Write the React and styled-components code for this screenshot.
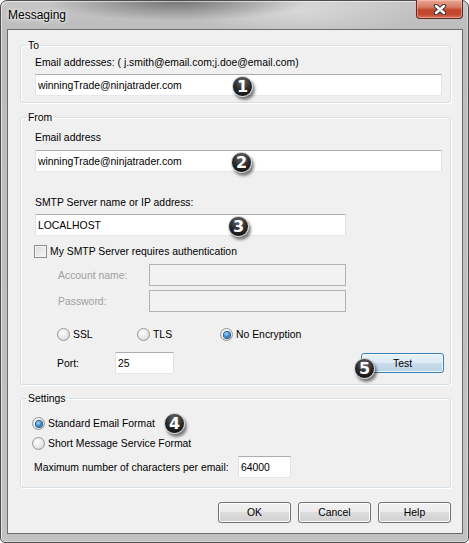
import React from 'react';
import styled, { createGlobalStyle, css } from 'styled-components';

const GlobalStyle = createGlobalStyle`
  html, body {
    margin: 0;
    padding: 0;
    background: #ffffff;
  }
  body {
    font-family: "Liberation Sans", Arial, sans-serif;
    font-size: 10.4px;
    color: #000000;
  }
  * {
    box-sizing: border-box;
  }
`;

const Window = styled.div`
  width: 469px;
  height: 543px;
  display: flex;
  flex-direction: column;
  padding: 0 5px 8px 6px;
  border: 1px solid #4e4e4e;
  border-radius: 7px 7px 5px 5px;
  background:
    radial-gradient(ellipse 130px 20px at 175px 0px, rgba(60, 60, 60, 0.6), rgba(60, 60, 60, 0) 100%),
    radial-gradient(ellipse 110px 30px at 300px 10px, rgba(255, 255, 255, 0.35), rgba(255, 255, 255, 0) 100%),
    linear-gradient(to bottom, #c6c6c6 0px, #bcbcbc 30px, #c2c2c2 100%);
  box-shadow: inset 1px 1px 0 rgba(255, 255, 255, 0.55), inset -1px -1px 0 rgba(255, 255, 255, 0.35);
`;

const TitleBar = styled.div`
  height: 28px;
  display: flex;
  justify-content: space-between;
  align-items: flex-start;
`;

const Title = styled.span`
  margin: 7px 0 0 1px;
  font-size: 12px;
  line-height: 15px;
  color: #000000;
  text-shadow: 0 0 6px rgba(255, 255, 255, 0.95), 0 0 3px rgba(255, 255, 255, 0.9);
`;

const CloseButton = styled.div`
  width: 47px;
  height: 19px;
  margin: -1px 0 0 0;
  display: flex;
  align-items: center;
  justify-content: center;
  border: 1px solid #5b2a22;
  border-top: none;
  border-radius: 0 0 4px 4px;
  background: linear-gradient(to bottom, #e7a793 0%, #d77a63 40%, #c1462c 55%, #c2482e 80%, #d8765b 100%);
  box-shadow: inset 0 0 0 1px rgba(255, 210, 200, 0.45);
`;

const Client = styled.div`
  flex: 1;
  display: flex;
  flex-direction: column;
  padding: 9px 11px 0 12px;
  border: 1px solid #6b6b6b;
  background: #f0f0f0;
`;

const Group = styled.fieldset`
  margin: ${p => p.$top || 0}px 0 0 0;
  padding: 0;
  min-width: 0;
  border: 1px solid #d5dfe5;
  border-radius: 3px;
  box-shadow: inset 1px 1px 0 #ffffff, 1px 1px 0 #ffffff;
`;

const Legend = styled.legend`
  margin-left: 5px;
  padding: 0 2px;
  line-height: 13px;
  color: #000000;
`;

const GroupBody = styled.div`
  display: flex;
  flex-direction: column;
  padding: ${p => p.$pad};
`;

const Label = styled.div`
  line-height: 13px;
  margin-top: ${p => p.$top || 0}px;
  margin-left: ${p => p.$left || 0}px;
  color: ${p => (p.$disabled ? '#a0a0a0' : '#000000')};
`;

const Field = styled.div`
  position: relative;
  width: ${p => (p.$width ? `${p.$width}px` : 'auto')};
  margin-top: ${p => p.$top || 0}px;
`;

const TextBox = styled.input`
  display: block;
  width: ${p => (p.$width ? `${p.$width}px` : '100%')};
  height: 22px;
  margin: 0;
  padding: 0 2px;
  font: inherit;
  color: #000000;
  outline: none;
  border: 1px solid #e2e3ea;
  border-top-color: #abadb3;
  border-bottom-color: #e3e9ef;
  background: #ffffff;

  ${p =>
    p.$disabled &&
    css`
      border: 1px solid #aeb2b5;
      background: #f2f2f2;
    `}
`;

const Row = styled.div`
  display: flex;
  align-items: center;
  margin-top: ${p => p.$top || 0}px;
  margin-left: ${p => p.$left || 0}px;
  position: relative;
`;

const RowLabel = styled.span`
  width: ${p => p.$width}px;
  flex: none;
  line-height: 13px;
  color: ${p => (p.$disabled ? '#a0a0a0' : '#000000')};
`;

const CheckBox = styled.span`
  width: 13px;
  height: 13px;
  flex: none;
  border: 1px solid #8e8f8f;
  background: linear-gradient(135deg, #dcdcdc 0%, #f6f6f6 100%);
  box-shadow: inset 0 0 0 1px #f4f4f4;
  margin-right: 3px;
`;

const RadioItem = styled.span`
  display: flex;
  align-items: center;
  width: ${p => (p.$width ? `${p.$width}px` : 'auto')};
  line-height: 13px;
`;

const RadioDot = styled.span`
  width: 13px;
  height: 13px;
  flex: none;
  margin-right: 3px;
  border-radius: 50%;
  border: 1px solid #979797;
  background: radial-gradient(circle at 40% 35%, #ffffff 0%, #ececec 45%, #cfcfcf 100%);
  display: flex;
  align-items: center;
  justify-content: center;

  &::after {
    content: '';
    width: 6px;
    height: 6px;
    border-radius: 50%;
    display: ${p => (p.$checked ? 'block' : 'none')};
    background: radial-gradient(circle at 40% 35%, #aee0ff 0%, #3d8fd3 45%, #0d4e8c 100%);
    box-shadow: 0 0 0 1px #2a5f8f;
  }
`;

const Button = styled.div`
  width: ${p => p.$width}px;
  height: ${p => p.$height || 21}px;
  display: flex;
  align-items: center;
  justify-content: center;
  border: 1px solid ${p => (p.$default ? '#3c7fb1' : '#707070')};
  border-radius: 3px;
  background: ${p =>
    p.$default
      ? 'linear-gradient(to bottom, #e9f3fb 0%, #dbeaf6 50%, #c8dceb 50%, #bcd3e4 100%)'
      : 'linear-gradient(to bottom, #f2f2f2 0%, #ebebeb 50%, #dddddd 50%, #cfcfcf 100%)'};
  box-shadow: inset 0 0 0 1px ${p => (p.$default ? '#f0f8fd' : '#fcfcfc')};
  line-height: 13px;
  position: relative;
`;

const Badge = styled.span`
  position: absolute;
  left: ${p => p.$x}px;
  top: ${p => p.$y}px;
  width: 21px;
  height: 21px;
  border-radius: 50%;
  border: 1px solid #c9c9c9;
  background: radial-gradient(circle at 50% 25%, #6a6a6a 0%, #2b2b2b 50%, #080808 100%);
  box-shadow: 2px 3px 3px rgba(0, 0, 0, 0.5);
  color: #ffffff;
  font: bold 16px/19px "DejaVu Sans", sans-serif;
  text-align: center;
  z-index: 2;
`;

const ButtonBar = styled.div`
  display: flex;
  justify-content: flex-end;
  gap: 7px;
  margin-top: 14px;
`;

const CloseGlyph = () => (
  <svg width="14" height="11" viewBox="0 0 14 11">
    <path d="M3 2 L11 9 M11 2 L3 9" stroke="#3a3a3a" strokeWidth="4.4" strokeLinecap="round" fill="none" />
    <path d="M3 2 L11 9 M11 2 L3 9" stroke="#ffffff" strokeWidth="2.4" strokeLinecap="round" fill="none" />
  </svg>
);

const App = () => (
  <>
    <GlobalStyle />
    <Window>
      <TitleBar>
        <Title>Messaging</Title>
        <CloseButton>
          <CloseGlyph />
        </CloseButton>
      </TitleBar>
      <Client>
        <Group>
          <Legend>To</Legend>
          <GroupBody $pad="4px 8px 6px 14px">
            <Label>Email addresses: ( j.smith@email.com;j.doe@email.com)</Label>
            <Field $top={5}>
              <TextBox readOnly value="winningTrade@ninjatrader.com" />
              <Badge $x={197} $y={2}>1</Badge>
            </Field>
          </GroupBody>
        </Group>

        <Group $top={8}>
          <Legend>From</Legend>
          <GroupBody $pad="7px 8px 10px 14px">
            <Label>Email address</Label>
            <Field $top={6}>
              <TextBox readOnly value="winningTrade@ninjatrader.com" />
              <Badge $x={196} $y={2}>2</Badge>
            </Field>
            <Label $top={24}>SMTP Server name or IP address:</Label>
            <Field $top={5} $width={311}>
              <TextBox readOnly value="LOCALHOST" />
              <Badge $x={193} $y={2}>3</Badge>
            </Field>
            <Row $top={9} $left={-1}>
              <CheckBox />
              <span>My SMTP Server requires authentication</span>
            </Row>
            <Row $top={6} $left={23}>
              <RowLabel $width={91} $disabled>Account name:</RowLabel>
              <TextBox readOnly $disabled $width={197} value="" />
            </Row>
            <Row $top={4} $left={23}>
              <RowLabel $width={91} $disabled>Password:</RowLabel>
              <TextBox readOnly $disabled $width={197} value="" />
            </Row>
            <Row $top={16} $left={22}>
              <RadioItem $width={80}>
                <RadioDot />
                SSL
              </RadioItem>
              <RadioItem $width={83}>
                <RadioDot />
                TLS
              </RadioItem>
              <RadioItem>
                <RadioDot $checked />
                No Encryption
              </RadioItem>
            </Row>
            <Row $top={11} $left={22}>
              <RowLabel $width={58}>Port:</RowLabel>
              <TextBox readOnly $width={59} value="25" />
              <Button $default $width={83} $height={20} style={{ marginLeft: 'auto', marginRight: -2 }}>
                Test
                <Badge $x={-8} $y={4}>5</Badge>
              </Button>
            </Row>
          </GroupBody>
        </Group>

        <Group $top={7}>
          <Legend>Settings</Legend>
          <GroupBody $pad="12px 8px 9px 11px">
            <Row>
              <RadioItem>
                <RadioDot $checked />
                Standard Email Format
              </RadioItem>
              <Badge $x={132} $y={-4}>4</Badge>
            </Row>
            <Row $top={7}>
              <RadioItem>
                <RadioDot />
                Short Message Service Format
              </RadioItem>
            </Row>
            <Row $top={6} $left={2}>
              <RowLabel $width={204}>Maximum number of characters per email:</RowLabel>
              <TextBox readOnly $width={53} value="64000" />
            </Row>
          </GroupBody>
        </Group>

        <ButtonBar>
          <Button $width={73}>OK</Button>
          <Button $width={73}>Cancel</Button>
          <Button $width={73}>Help</Button>
        </ButtonBar>
      </Client>
    </Window>
  </>
);

export default App;
